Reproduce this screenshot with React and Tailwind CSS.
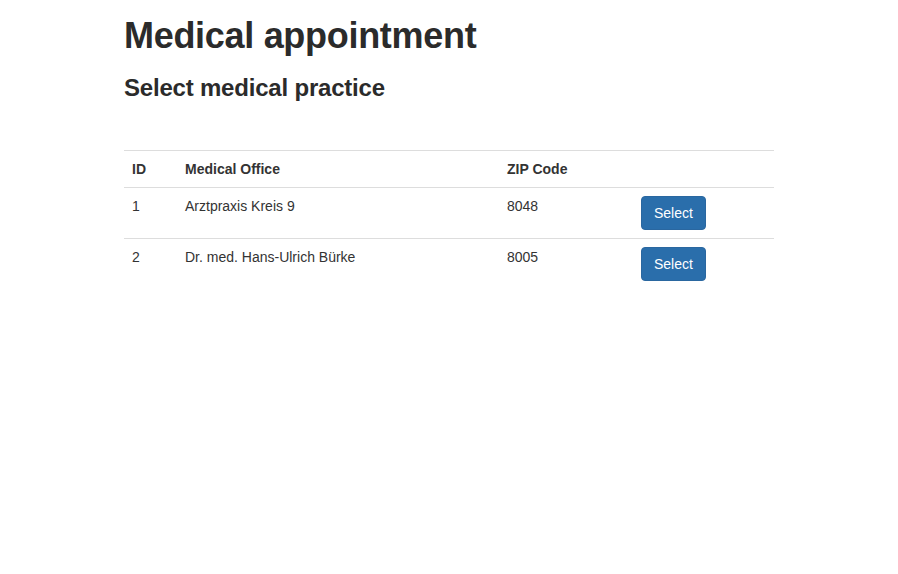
export default function App() {
  const rows = [
    { id: 1, name: "Arztpraxis Kreis 9", zip: "8048" },
    { id: 2, name: "Dr. med. Hans-Ulrich Bürke", zip: "8005" },
  ];
  return (
    <div className="min-h-[574px] bg-white text-[#333] text-[14px] leading-[20px]" style={{ fontFamily: '"Liberation Sans", Arial, sans-serif' }}>
      <div className="mx-auto w-[650px] pt-4">
        <h1 className="text-[36px] leading-[40px] font-bold tracking-[-0.3px] text-[#2b2b2b]">Medical appointment</h1>
        <h2 className="mt-[19px] text-[24px] leading-[26px] font-bold tracking-[-0.2px] text-[#2b2b2b]">Select medical practice</h2>
        <table className="mt-[49px] w-full table-fixed border-collapse">
          <thead>
            <tr className="border-t border-b border-[#ddd]">
              <th className="w-[53px] p-2 text-left font-bold">ID</th>
              <th className="w-[322px] p-2 text-left font-bold">Medical Office</th>
              <th className="w-[134px] p-2 text-left font-bold">ZIP Code</th>
              <th className="p-2"></th>
            </tr>
          </thead>
          <tbody>
            {rows.map((r, i) => (
              <tr key={r.id} className={i > 0 ? "border-t border-[#ddd]" : ""}>
                <td className="p-2 align-top">{r.id}</td>
                <td className="p-2 align-top">{r.name}</td>
                <td className="p-2 align-top">{r.zip}</td>
                <td className="p-2 align-top">
                  <button className="rounded-[4px] border border-[#2a67a0] bg-[#2a6eab] px-3 py-[6px] text-[14px] leading-[20px] text-white">
                    Select
                  </button>
                </td>
              </tr>
            ))}
          </tbody>
        </table>
      </div>
    </div>
  );
}
